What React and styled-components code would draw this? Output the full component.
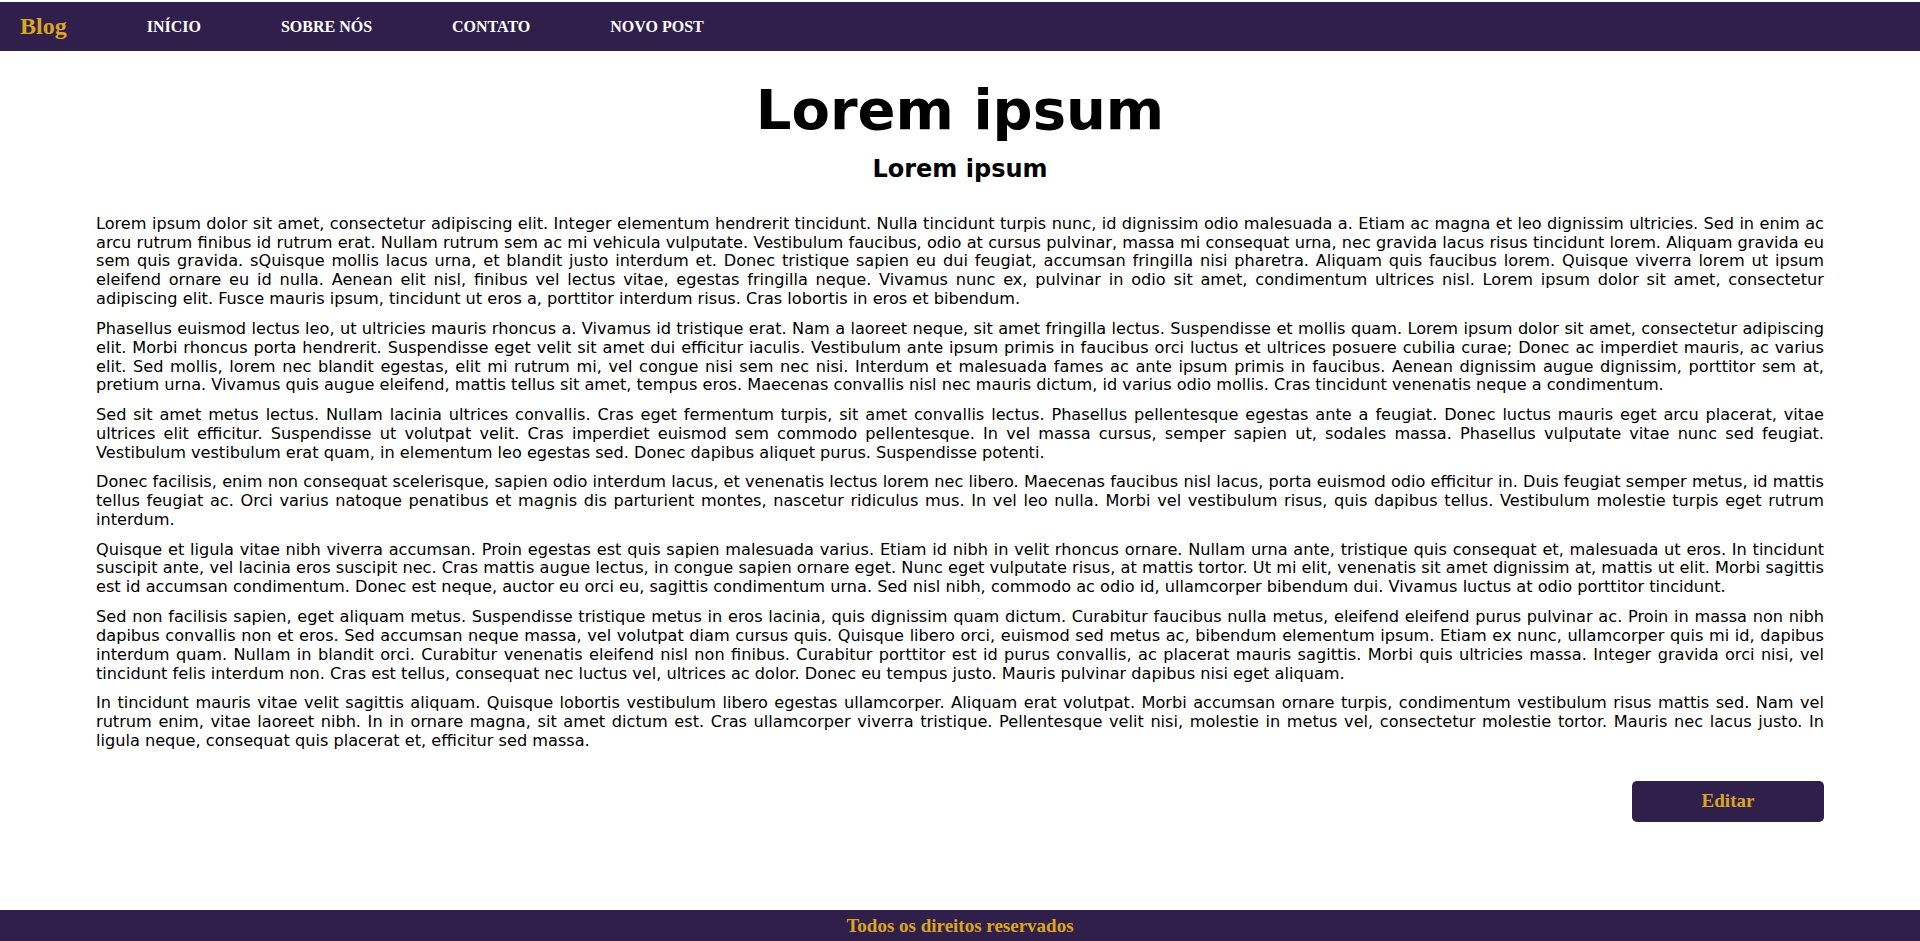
import React from "react"
import styled, { createGlobalStyle } from "styled-components"

const GlobalStyle = createGlobalStyle`
  html, body {
    margin: 0;
    padding: 0;
    background: #fff;
  }
  body {
    font-family: "Liberation Serif", serif;
  }
`

const paragraphs = [
  "Lorem ipsum dolor sit amet, consectetur adipiscing elit. Integer elementum hendrerit tincidunt. Nulla tincidunt turpis nunc, id dignissim odio malesuada a. Etiam ac magna et leo dignissim ultricies. Sed in enim ac arcu rutrum finibus id rutrum erat. Nullam rutrum sem ac mi vehicula vulputate. Vestibulum faucibus, odio at cursus pulvinar, massa mi consequat urna, nec gravida lacus risus tincidunt lorem. Aliquam gravida eu sem quis gravida. sQuisque mollis lacus urna, et blandit justo interdum et. Donec tristique sapien eu dui feugiat, accumsan fringilla nisi pharetra. Aliquam quis faucibus lorem. Quisque viverra lorem ut ipsum eleifend ornare eu id nulla. Aenean elit nisl, finibus vel lectus vitae, egestas fringilla neque. Vivamus nunc ex, pulvinar in odio sit amet, condimentum ultrices nisl. Lorem ipsum dolor sit amet, consectetur adipiscing elit. Fusce mauris ipsum, tincidunt ut eros a, porttitor interdum risus. Cras lobortis in eros et bibendum.",
  "Phasellus euismod lectus leo, ut ultricies mauris rhoncus a. Vivamus id tristique erat. Nam a laoreet neque, sit amet fringilla lectus. Suspendisse et mollis quam. Lorem ipsum dolor sit amet, consectetur adipiscing elit. Morbi rhoncus porta hendrerit. Suspendisse eget velit sit amet dui efficitur iaculis. Vestibulum ante ipsum primis in faucibus orci luctus et ultrices posuere cubilia curae; Donec ac imperdiet mauris, ac varius elit. Sed mollis, lorem nec blandit egestas, elit mi rutrum mi, vel congue nisi sem nec nisi. Interdum et malesuada fames ac ante ipsum primis in faucibus. Aenean dignissim augue dignissim, porttitor sem at, pretium urna. Vivamus quis augue eleifend, mattis tellus sit amet, tempus eros. Maecenas convallis nisl nec mauris dictum, id varius odio mollis. Cras tincidunt venenatis neque a condimentum.",
  "Sed sit amet metus lectus. Nullam lacinia ultrices convallis. Cras eget fermentum turpis, sit amet convallis lectus. Phasellus pellentesque egestas ante a feugiat. Donec luctus mauris eget arcu placerat, vitae ultrices elit efficitur. Suspendisse ut volutpat velit. Cras imperdiet euismod sem commodo pellentesque. In vel massa cursus, semper sapien ut, sodales massa. Phasellus vulputate vitae nunc sed feugiat. Vestibulum vestibulum erat quam, in elementum leo egestas sed. Donec dapibus aliquet purus. Suspendisse potenti.",
  "Donec facilisis, enim non consequat scelerisque, sapien odio interdum lacus, et venenatis lectus lorem nec libero. Maecenas faucibus nisl lacus, porta euismod odio efficitur in. Duis feugiat semper metus, id mattis tellus feugiat ac. Orci varius natoque penatibus et magnis dis parturient montes, nascetur ridiculus mus. In vel leo nulla. Morbi vel vestibulum risus, quis dapibus tellus. Vestibulum molestie turpis eget rutrum interdum.",
  "Quisque et ligula vitae nibh viverra accumsan. Proin egestas est quis sapien malesuada varius. Etiam id nibh in velit rhoncus ornare. Nullam urna ante, tristique quis consequat et, malesuada ut eros. In tincidunt suscipit ante, vel lacinia eros suscipit nec. Cras mattis augue lectus, in congue sapien ornare eget. Nunc eget vulputate risus, at mattis tortor. Ut mi elit, venenatis sit amet dignissim at, mattis ut elit. Morbi sagittis est id accumsan condimentum. Donec est neque, auctor eu orci eu, sagittis condimentum urna. Sed nisl nibh, commodo ac odio id, ullamcorper bibendum dui. Vivamus luctus at odio porttitor tincidunt.",
  "Sed non facilisis sapien, eget aliquam metus. Suspendisse tristique metus in eros lacinia, quis dignissim quam dictum. Curabitur faucibus nulla metus, eleifend eleifend purus pulvinar ac. Proin in massa non nibh dapibus convallis non et eros. Sed accumsan neque massa, vel volutpat diam cursus quis. Quisque libero orci, euismod sed metus ac, bibendum elementum ipsum. Etiam ex nunc, ullamcorper quis mi id, dapibus interdum quam. Nullam in blandit orci. Curabitur venenatis eleifend nisl non finibus. Curabitur porttitor est id purus convallis, ac placerat mauris sagittis. Morbi quis ultricies massa. Integer gravida orci nisi, vel tincidunt felis interdum non. Cras est tellus, consequat nec luctus vel, ultrices ac dolor. Donec eu tempus justo. Mauris pulvinar dapibus nisi eget aliquam.",
  "In tincidunt mauris vitae velit sagittis aliquam. Quisque lobortis vestibulum libero egestas ullamcorper. Aliquam erat volutpat. Morbi accumsan ornare turpis, condimentum vestibulum risus mattis sed. Nam vel rutrum enim, vitae laoreet nibh. In in ornare magna, sit amet dictum est. Cras ullamcorper viverra tristique. Pellentesque velit nisi, molestie in metus vel, consectetur molestie tortor. Mauris nec lacus justo. In ligula neque, consequat quis placerat et, efficitur sed massa.",
]

const links = ["INÍCIO", "SOBRE NÓS", "CONTATO", "NOVO POST"]

const App = () => {
  return (
    <Page>
      <GlobalStyle />
      <NavBar>
        <Logo>Blog</Logo>
        {links.map((link) => (
          <NavLink key={link}>{link}</NavLink>
        ))}
      </NavBar>
      <Main>
        <Title>Lorem ipsum</Title>
        <Subtitle>Lorem ipsum</Subtitle>
        <Post>
          {paragraphs.map((text, i) => (
            <Paragraph key={i}>{text}</Paragraph>
          ))}
        </Post>
        <Actions>
          <EditButton>Editar</EditButton>
        </Actions>
      </Main>
      <Footer>Todos os direitos reservados</Footer>
    </Page>
  )
}

export default App

const Page = styled.div`
  min-height: 100vh;
  display: flex;
  flex-direction: column;
  padding-top: 2px;
  box-sizing: border-box;
`

const NavBar = styled.nav`
  height: 49px;
  background: #311f4b;
  display: flex;
  align-items: center;
  gap: 80px;
  padding-left: 20px;
`

const Logo = styled.span`
  font-family: "Liberation Serif", serif;
  font-weight: bold;
  font-size: 24px;
  color: #daa520;
`

const NavLink = styled.a`
  font-family: "Liberation Serif", serif;
  font-weight: bold;
  font-size: 16px;
  color: #fff;
  text-decoration: none;
  cursor: pointer;
`

const Main = styled.main`
  flex: 1;
  padding: 0 96px;
  display: flex;
  flex-direction: column;
`

const Title = styled.h1`
  font-family: "DejaVu Sans", Verdana, sans-serif;
  font-weight: bold;
  font-size: 56px;
  text-align: center;
  margin: 26px 0 0;
`

const Subtitle = styled.h2`
  font-family: "DejaVu Sans", Verdana, sans-serif;
  font-weight: bold;
  font-size: 24px;
  text-align: center;
  margin: 13px 0 0;
`

const Post = styled.div`
  margin-top: 21px;
`

const Paragraph = styled.p`
  font-family: "DejaVu Sans", Tahoma, sans-serif;
  font-size: 16.15px;
  line-height: 18.9px;
  text-align: justify;
  color: #000;
  margin: 10.6px 0 0;
`

const Actions = styled.div`
  display: flex;
  justify-content: flex-end;
  margin-top: 30px;
`

const EditButton = styled.button`
  width: 192px;
  height: 41px;
  border: none;
  border-radius: 5px;
  background: #311f4b;
  color: #daa520;
  font-family: "Liberation Serif", serif;
  font-weight: bold;
  font-size: 19px;
  cursor: pointer;
`

const Footer = styled.footer`
  height: 31px;
  background: #311f4b;
  color: #daa520;
  font-family: "Liberation Serif", serif;
  font-weight: bold;
  font-size: 19px;
  display: flex;
  align-items: center;
  justify-content: center;
`
